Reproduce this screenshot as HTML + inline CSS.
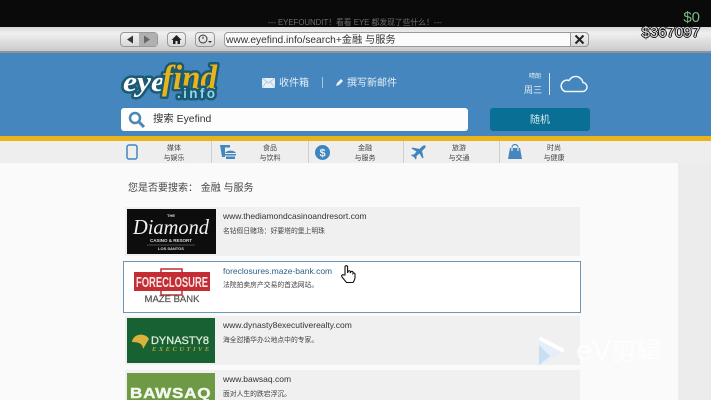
<!DOCTYPE html>
<html><head><meta charset="utf-8">
<style>
html,body{margin:0;padding:0;width:711px;height:400px;overflow:hidden;background:#fafafa}
body{position:relative;font-family:"Liberation Sans","Noto Sans CJK SC",sans-serif}
#w{position:absolute;left:0;top:0;width:711px;height:400px;overflow:hidden;filter:blur(.35px)}
.a{position:absolute;white-space:nowrap}
.btn{position:absolute;box-sizing:border-box;border:1px solid #999;border-radius:4px;background:linear-gradient(#f4f4f4,#d8d8d8)}
.row{position:absolute;left:125px;width:455px;background:#f0f0f0}
.url{position:absolute;left:223px;font-size:8.500px;color:#333;white-space:nowrap}
.desc{position:absolute;left:223px;font-size:6.800px;color:#444;white-space:nowrap}
.nav{position:absolute;top:144px;font-size:7px;line-height:10px;text-align:center;color:#444;width:40px}
.sep{position:absolute;top:141px;width:1px;height:22px;background:#cfcfcf}
.lg{paint-order:stroke;stroke:#1a5a74;stroke-width:5px;stroke-linejoin:round}
</style></head><body><div id="w">
<div class="a" style="left:0;top:0;width:711px;height:27px;background:#0a0a0a"></div>
<div class="a" style="left:268px;top:17px;font-size:7.800px;color:#6e6e6e">--- EYEFOUNDIT！看看 EYE 都发现了些什么！---</div>
<div class="a" style="left:0;top:27px;width:711px;height:25px;background:linear-gradient(#d8d8d8,#f0f0f0 25%,#c8c8c8)"></div>
<div class="a" style="left:0;top:51px;width:711px;height:2px;background:#8f9499"></div>

<div class="btn" style="left:120px;top:32px;width:38px;height:15px"></div>
<div class="a" style="left:139px;top:33px;width:18px;height:13px;background:#b0b0b0"></div>
<svg class="a" style="left:120px;top:32px" width="38" height="15"><path d="M7 7.500l6-4v8z" fill="#333"/><path d="M30 7.500l-6-4v8z" fill="#666"/></svg>
<div class="btn" style="left:167px;top:32px;width:19px;height:15px"></div>
<svg class="a" style="left:167px;top:32px" width="19" height="15"><path d="M9.500 3L4.500 8H6v4h2.500V9h2v3H13V8h1.500z" fill="#222"/></svg>
<div class="btn" style="left:195px;top:32px;width:20px;height:15px"></div>
<svg class="a" style="left:195px;top:32px" width="20" height="15"><circle cx="8" cy="7" r="4" fill="none" stroke="#333"/><path d="M8 4.500V7" stroke="#333"/><path d="M13 9h4l-2 2z" fill="#333"/></svg>
<div class="a" style="left:224px;top:32px;width:365px;height:15px;box-sizing:border-box;border:1px solid #999;border-radius:4px;background:#fbfbfb"></div>
<div class="a" style="left:226px;top:34px;font-size:10.200px;line-height:13px;color:#333">www.eyefind.info/search+金融 与服务</div>
<div class="btn" style="left:570px;top:32px;width:19px;height:15px;border-radius:0 4px 4px 0"></div>
<svg class="a" style="left:570px;top:32px" width="19" height="15"><path d="M5.500 3.500l8 8m0-8l-8 8" stroke="#222" stroke-width="2"/></svg>

<div class="a" style="right:11px;top:9px;font-size:15px;line-height:17px;color:#78b884">$0</div>
<div class="a" style="right:11px;top:24px;font-size:15px;line-height:17px;color:#ddd;text-shadow:-1px 0 #111,1px 0 #111,0 -1px #111,0 1px #111">$367097</div>

<div class="a" style="left:0;top:53px;width:711px;height:83px;background:#4486bd"></div>
<div class="a" style="left:0;top:136px;width:711px;height:5px;background:#eab419"></div>

<svg class="a" style="left:118px;top:58px" width="104" height="46">
<text class="lg" x="5" y="33" font-family="Liberation Serif,serif" font-style="italic" font-weight="700" font-size="29" fill="#fff" textLength="42" lengthAdjust="spacingAndGlyphs">eye</text>
<text class="lg" x="44" y="31" font-family="Liberation Serif,serif" font-style="italic" font-weight="700" font-size="35" fill="#eab419" textLength="55" lengthAdjust="spacingAndGlyphs">find</text>
<text class="lg" x="59" y="40" font-family="Liberation Sans,sans-serif" font-weight="700" font-size="13.500" fill="#8fd6ea" textLength="38">.info</text>
</svg>

<svg class="a" style="left:262px;top:78px" width="13" height="10"><rect width="13" height="10" fill="#e8f0f7"/><path d="M0 0l6.500 5L13 0M0 10l4.500-6M13 10L8.500 4" stroke="#a5c5de" stroke-width=".8" fill="none"/></svg>
<div class="a" style="left:279px;top:77px;font-size:10px;line-height:14px;color:#e6eff6">收件箱</div>
<div class="a" style="left:322px;top:77px;width:1px;height:11px;background:#a9c8e0"></div>
<svg class="a" style="left:335px;top:78px" width="9" height="9"><path d="M1 8l1-3 4-4 2 2-4 4z" fill="#eef4f9"/></svg>
<div class="a" style="left:347px;top:77px;font-size:10px;line-height:14px;color:#e6eff6">撰写新邮件</div>

<div class="a" style="left:529px;top:73px;font-size:6px;line-height:8px;color:#e6eff6">晴朗</div>
<div class="a" style="left:524px;top:85px;font-size:9px;line-height:11px;color:#e6eff6">周三</div>
<div class="a" style="left:549px;top:73px;width:1px;height:22px;background:#dfeaf3"></div>
<svg class="a" style="left:558px;top:74px" width="31" height="20"><path d="M7 17.500H24a4.500 4.500 0 0 0 1-9 7.500 7.500 0 0 0-14-2A5.500 5.500 0 0 0 7 17.500Z" fill="none" stroke="#f2f6fa" stroke-width="1.500"/></svg>

<div class="a" style="left:121px;top:108px;width:347px;height:23px;background:#fdfdfd;border-radius:3px"></div>
<svg class="a" style="left:127px;top:110px" width="20" height="19"><circle cx="8" cy="8" r="5" fill="none" stroke="#4a87b5" stroke-width="2.500"/><path d="M12 12l5 5" stroke="#4a87b5" stroke-width="3"/></svg>
<div class="a" style="left:153px;top:113px;font-size:10.400px;line-height:14px;color:#333">搜索 Eyefind</div>
<div class="a" style="left:490px;top:108px;width:100px;height:23px;background:#096f94;border-radius:3px"></div>
<div class="a" style="left:490px;top:114px;width:100px;text-align:center;font-size:10px;line-height:14px;color:#dbe9ef">随机</div>

<div class="a" style="left:0;top:141px;width:711px;height:22px;background:#eeeeee"></div>
<div class="sep" style="left:211px"></div><div class="sep" style="left:308px"></div><div class="sep" style="left:403px"></div><div class="sep" style="left:499px"></div>

<svg class="a" style="left:126px;top:144px" width="13" height="16"><rect x="1" y="1" width="10" height="14" rx="2" fill="none" stroke="#4486bd" stroke-width="1.500"/></svg>
<div class="nav" style="left:154px">媒体<br>与娱乐</div>
<svg class="a" style="left:218px;top:144px" width="20" height="16"><path d="M2 1h10v2.500H7V13H4z" fill="#4486bd"/><path d="M7 9a6 4 0 0 1 11 0zM7 10h11v1.500H7zM8 12.500h9V15H8z" fill="#4486bd"/></svg>
<div class="nav" style="left:250px">食品<br>与饮料</div>
<svg class="a" style="left:315px;top:145px" width="15" height="15"><circle cx="7.500" cy="7.500" r="7.500" fill="#3f85bd"/><text x="7.500" y="11.500" text-anchor="middle" font-size="11" font-weight="700" fill="#eee">$</text></svg>
<div class="nav" style="left:345px">金融<br>与服务</div>
<svg class="a" style="left:411px;top:145px" width="15" height="15"><path d="M14.500 .5c-1.500-.5-3 .5-4 1.500L8.500 4 1.500 2.500 .5 3.500l5 3-2.500 3H1l-1 1 3 1.500 1.500 2.500 1-1V11l3-2.500 3 5 1-1L11 6l2-2c1-1 2-2 1.500-3.500z" fill="#3f85bd"/></svg>
<div class="nav" style="left:439px">旅游<br>与交通</div>
<svg class="a" style="left:507px;top:144px" width="16" height="16"><path d="M3 4h10l2 11H1z" fill="#4486bd"/><path d="M5 7V3.500a3 3 0 0 1 6 0V7" fill="none" stroke="#eee" stroke-width="1.200"/><path d="M5 3.500a3 3 0 0 1 6 0" fill="none" stroke="#4486bd" stroke-width="1.200"/></svg>
<div class="nav" style="left:534px">时尚<br>与健康</div>

<div class="a" style="left:678px;top:163px;width:33px;height:237px;background:#ececec"></div>
<div class="a" style="left:128px;top:182px;font-size:10px;line-height:14px;color:#444">您是否要搜索： 金融 与服务</div>

<div class="row" style="top:207px;height:49px"></div>
<div class="a" style="left:127px;top:209px;width:89px;height:45px;background:#0d0d0d;overflow:hidden"></div>
<svg class="a" style="left:127px;top:209px" width="89" height="45">
<text x="44" y="8" text-anchor="middle" font-size="4" font-weight="700" fill="#ddd">THE</text>
<text x="44" y="25" text-anchor="middle" font-family="Liberation Serif,serif" font-style="italic" font-size="21" fill="#f0f0f0" textLength="76" lengthAdjust="spacingAndGlyphs">Diamond</text>
<text x="44" y="33" text-anchor="middle" font-size="4.500" font-weight="700" fill="#ddd">CASINO &amp; RESORT</text>
<path d="M20 36h48" stroke="#888" stroke-width=".5"/>
<text x="44" y="41" text-anchor="middle" font-size="4" font-weight="700" fill="#ddd">LOS SANTOS</text>
</svg>
<div class="url" style="top:211px">www.thediamondcasinoandresort.com</div>
<div class="desc" style="top:225px">名钻假日赌场：好要塔的堡上明珠</div>

<div class="a" style="left:123px;top:261px;width:458px;height:52px;box-sizing:border-box;border:1px solid #6c97ba;background:#fff"></div>
<svg class="a" style="left:133px;top:268px" width="80" height="38">
<rect x="1" y="4" width="76" height="19" fill="#c42d34"/>
<rect x="28" y="1" width="21" height="26" fill="none" stroke="#c42d34" stroke-width="1.500"/>
<text x="39" y="19" text-anchor="middle" font-size="15" font-weight="700" fill="#f6e6e6" textLength="72" lengthAdjust="spacingAndGlyphs">FORECLOSURE</text>
<text x="39" y="34" text-anchor="middle" font-size="9.500" fill="#555" stroke="#555" stroke-width=".2">MAZE BANK</text>
</svg>
<div class="url" style="top:266px;color:#2e6288">foreclosures.maze-bank.com</div>
<div class="desc" style="top:279px">法院拍卖房产交易的首选网站。</div>

<svg class="a" style="left:340px;top:264px" width="17" height="21"><path d="M5 11V3a1.300 1.300 0 0 1 2.600 0v6l.4-1.500a1.200 1.200 0 0 1 2.300 0V9l.5-1a1.200 1.200 0 0 1 2.200 0l0 1.500a1.100 1.100 0 0 1 2 .5v3.500c0 2-1 3.500-2 5H6.500L2 13c-1-1.500.5-3 2-2z" fill="#fff" stroke="#111" stroke-width="1.100"/></svg>

<div class="row" style="top:316px;height:49px"></div>
<div class="a" style="left:127px;top:318px;width:88px;height:45px;background:#176133"></div>
<svg class="a" style="left:127px;top:318px" width="88" height="45">
<path d="M5 24a9 8 0 0 1 17-3L16 31c0-5-4-7-11-7z" fill="#d8b23a"/>
<text x="24" y="26" font-size="11" fill="#dfe9d8" stroke="#dfe9d8" stroke-width=".3" textLength="58" lengthAdjust="spacingAndGlyphs">DYNASTY8</text>
<text x="25" y="33" font-family="Liberation Serif,serif" font-style="italic" font-weight="700" font-size="6.500" letter-spacing="2.500" fill="#b5a93f">EXECUTIVE</text>
</svg>
<div class="url" style="top:320px">www.dynasty8executiverealty.com</div>
<div class="desc" style="top:334px">海全怼播华办公地点中的专家。</div>

<div class="row" style="top:370px;height:30px"></div>
<div class="a" style="left:127px;top:373px;width:88px;height:27px;background:#6f9a45;overflow:hidden"></div>
<div class="a" style="left:130px;top:387px;width:84px;height:13px;overflow:hidden"><div style="font-size:14.500px;line-height:14px;font-weight:700;color:#f4f7ef;letter-spacing:.6px;transform:scaleX(1.180);transform-origin:left;-webkit-text-stroke:.4px #f4f7ef">BAWSAQ</div></div>
<div class="url" style="top:374px">www.bawsaq.com</div>
<div class="desc" style="top:388px">面对人生的跌宕浮沉。</div>

<svg class="a" style="left:536px;top:335px" width="32" height="34"><path d="M3 4L28 17 3 31z" fill="#e3eff9" opacity=".75"/><path d="M3 10v20l11-9z" fill="#c8dff3"/><path d="M5 4l21 11" stroke="#fff" stroke-width="4" stroke-linecap="round"/></svg>
<div class="a" style="left:576px;top:334px;font-size:29px;line-height:34px;color:#fff;opacity:.75">eV<span style="font-size:25px">剪辑</span></div>
</div></body></html>
